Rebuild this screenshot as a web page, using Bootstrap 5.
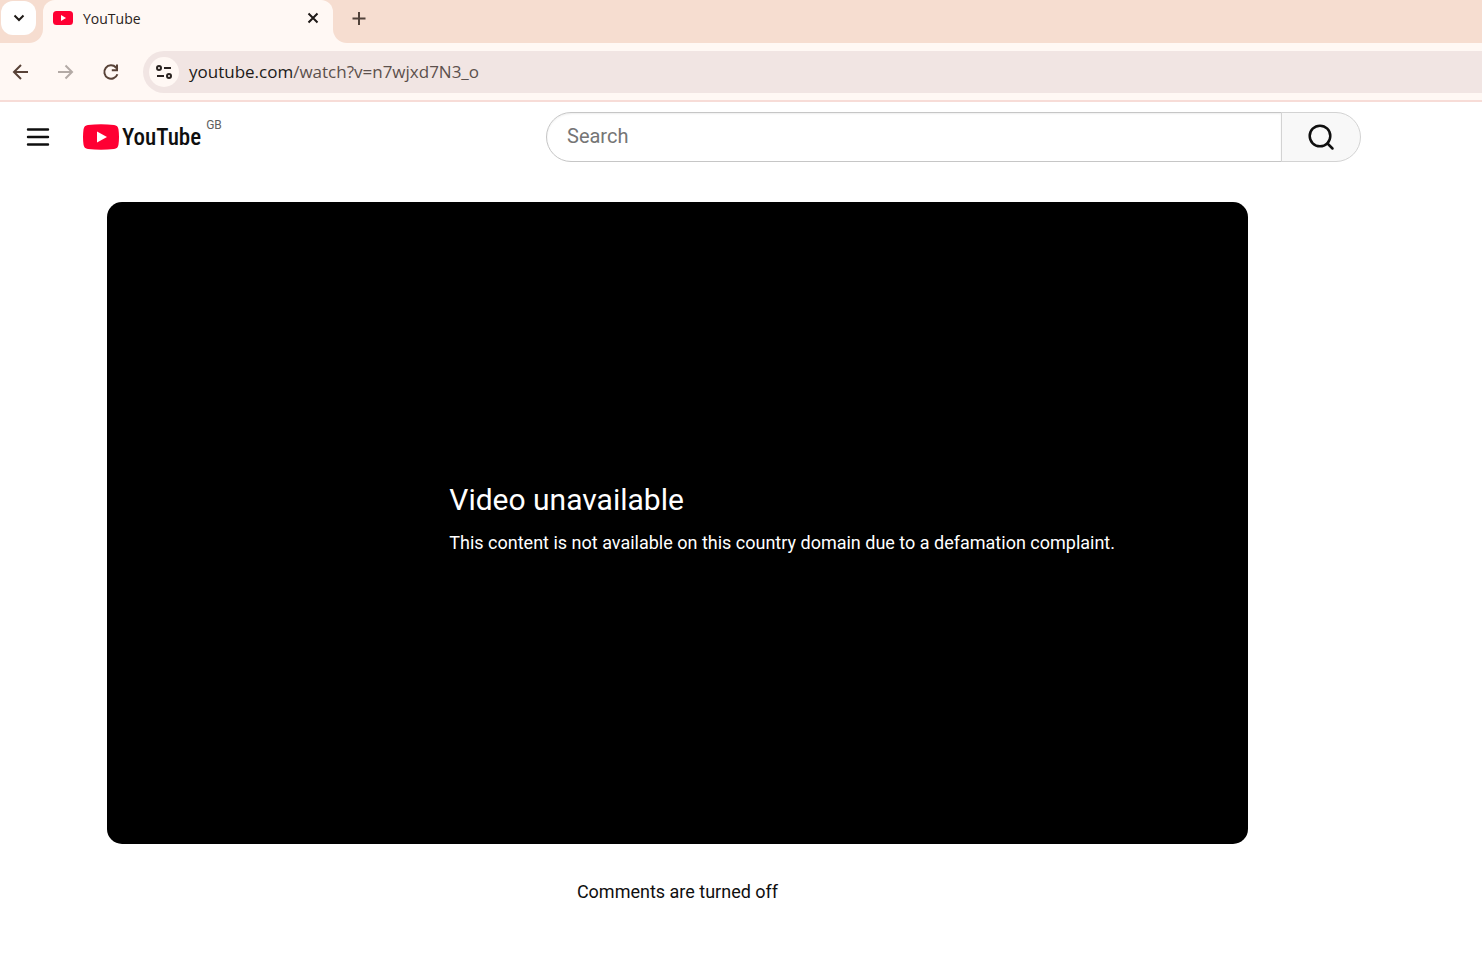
<!DOCTYPE html>
<html lang="en-GB">
<head>
<meta charset="utf-8">
<meta name="viewport" content="width=device-width, initial-scale=1">
<title>YouTube</title>
<link href="https://cdn.jsdelivr.net/npm/bootstrap@5.3.0/dist/css/bootstrap.min.css" rel="stylesheet">
<style>
:root { --frame: #f6ddd0; --toolbar: #fff8f4; --omni: #f1e5e3; --chrome-font: "Open Sans", "Noto Sans", sans-serif; }
body { font-family: Roboto, Arial, sans-serif; color: #0f0f0f; background: #fff; }
svg { display: block; flex: none; }
.plain-btn { padding: 0; border: 0; background: none; color: inherit; display: flex; align-items: center; justify-content: center; }
.browser { font-family: var(--chrome-font); background: var(--toolbar); border-bottom: 2px solid #f7dcd7; }
.tab-strip { height: 43px; }
.strip-start { width: 43px; padding: 1px; background: var(--frame); border-bottom-right-radius: 14px; }
.tab-search { width: 35px; height: 34px; border-radius: 12px; background: #fff; color: #1f1a17; }
.tab-slot { width: 290px; background: linear-gradient(var(--frame) 20px, var(--toolbar) 20px); }
.open-tab { height: 100%; padding: 0 12px 7px 10px; gap: 10px; border-radius: 12px 12px 0 0; background: var(--toolbar); font-size: 14px; color: #2a2320; }
.strip-end { background: var(--frame); border-bottom-left-radius: 14px; color: #51423a; padding: 0 0 7px 18px; }
.tool-row { height: 57px; padding-left: 12px; color: #584237; }
.nav-set { gap: 27px; width: 131px; }
.nav-set button:disabled { color: #b3aaa5; }
.omnibox { height: 42px; border-radius: 21px 0 0 21px; background: var(--omni); padding-left: 6px; gap: 10px; }
.site-info { width: 30px; height: 30px; border-radius: 50%; background: var(--toolbar); color: #2a2320; }
.address { font-size: 17px; color: #5c504c; padding-top: 1px; }
.address b { font-weight: 400; color: #201a18; }
.masthead { padding: 10px 121px 0 26px; height: 60px; }
.brand-area { width: 520px; }
.brand-link { margin-left: 33px; gap: 3px; color: #0f0f0f; }
.wordmark { font-family: "Roboto Condensed", "Liberation Sans Narrow", Roboto, sans-serif; font-weight: 500; font-size: 23px; line-height: 28px; padding-top: 2px; }
.region-code { font-size: 12px; line-height: 12px; color: #606060; margin-left: 5px; margin-bottom: 24px; }
.search-field { height: 50px; padding: 0 20px 2px; border: 1px solid #c6c6c6; border-radius: 25px 0 0 25px; box-shadow: inset 0 1px 2px #eee; font-size: 20px; }
.search-field::placeholder { color: #757575; }
.search-btn { width: 80px; height: 50px; margin-left: -1px; border: 1px solid #d3d3d3; border-radius: 0 25px 25px 0; background: #f8f8f8; }
.watch { padding: 40px 234px 0 107px; }
.player { aspect-ratio: 16 / 9; border-radius: 15px; background: #000; color: #fff; padding-left: 30%; }
.player h1 { font-size: 30px; line-height: 40px; font-weight: 400; margin: 0 0 11px; }
.player p { font-size: 18px; line-height: 24px; margin: 0 0 11px; }
.comments-note { font-size: 18px; line-height: 24px; margin: 36px 0; }
</style>
</head>
<body>
<header class="browser">
  <div class="tab-strip d-flex">
    <div class="strip-start">
      <button class="plain-btn tab-search" aria-label="Search tabs"><svg width="12" height="8" viewBox="0 0 12 8" fill="none" stroke="currentColor" stroke-width="2"><path d="M1.500 1.500 6 6l4.500-4.500"/></svg></button>
    </div>
    <div class="tab-slot">
      <div class="open-tab d-flex align-items-center">
        <svg width="20" height="14" viewBox="0 0 20 14"><rect width="20" height="14" rx="3.500" fill="#ff0033"/><path d="M8 4v6l5-3z" fill="#fff"/></svg>
        <span class="flex-grow-1">YouTube</span>
        <button class="plain-btn" aria-label="Close tab"><svg width="16" height="16" viewBox="0 0 16 16" stroke="#1f1a17" stroke-width="2"><path d="m3.500 3.500 9 9m0-9-9 9"/></svg></button>
      </div>
    </div>
    <div class="strip-end flex-grow-1 d-flex align-items-center">
      <button class="plain-btn" aria-label="New tab"><svg width="15" height="15" viewBox="0 0 15 15" stroke="currentColor" stroke-width="2"><path d="M8 1v13M1.500 7.500h13"/></svg></button>
    </div>
  </div>
  <div class="tool-row d-flex align-items-center">
    <nav class="nav-set d-flex flex-shrink-0" aria-label="Browser controls">
      <button class="plain-btn" aria-label="Back"><svg width="18" height="18" viewBox="0 0 18 18" fill="none" stroke="currentColor" stroke-width="2"><path d="M16 9H2.500M9 2 2 9l7 7"/></svg></button>
      <button class="plain-btn" aria-label="Forward" disabled><svg width="18" height="18" viewBox="0 0 18 18" fill="none" stroke="currentColor" stroke-width="2"><path d="M1 9h14M8.500 2.500 15 9l-6.500 6.500"/></svg></button>
      <button class="plain-btn" aria-label="Reload"><svg width="18" height="18" viewBox="0 0 18 18" fill="none" stroke="currentColor" stroke-width="2"><path d="M15.400 11.200A6.700 6.700 0 1 1 14 4.500l1.500 1.700"/><path d="M15 1.500v5.700H9.800" /></svg></button>
    </nav>
    <div class="omnibox flex-grow-1 d-flex align-items-center">
      <button class="plain-btn site-info" aria-label="View site information"><svg width="16" height="16" viewBox="0 0 16 16" fill="none" stroke="currentColor" stroke-width="2"><circle cx="3" cy="4" r="2"/><path d="M8 4h7M1 12h7"/><circle cx="13" cy="12" r="2"/></svg></button>
      <span class="address text-nowrap"><b>youtube.com</b>/watch?v=n7wjxd7N3_o</span>
    </div>
  </div>
</header>

<div class="masthead d-flex align-items-center">
  <div class="brand-area d-flex align-items-center flex-shrink-0">
    <button class="plain-btn" aria-label="Guide"><svg width="24" height="22" viewBox="0 0 24 22" stroke="#0f0f0f" stroke-width="2.400" stroke-linecap="round"><path d="M2 3.500h20M2 11h20M2 18.500h20"/></svg></button>
    <a href="#" class="brand-link d-flex align-items-center text-decoration-none" aria-label="YouTube Home">
      <svg width="36" height="26" viewBox="0 0 36 26"><path d="M5 1Q18-.4 31 1q4 .3 4.500 4.500 1 7.500 0 15Q35 24.500 31 25q-13 1.400-26 0-4-.5-4.500-4.500-1-7.500 0-15Q1 1.300 5 1Z" fill="#ff0033"/><path d="M14 7.500v11l10-5.500z" fill="#fff"/></svg>
      <span class="wordmark">YouTube</span>
    </a>
    <span class="region-code">GB</span>
  </div>
  <form class="d-flex flex-grow-1" role="search">
    <input class="search-field flex-grow-1" type="text" placeholder="Search" aria-label="Search">
    <button class="plain-btn search-btn" type="button" aria-label="Search"><svg width="28" height="28" viewBox="0 0 28 28" fill="none" stroke="#0f0f0f" stroke-width="2.500" stroke-linecap="round"><circle cx="13" cy="13" r="10.300"/><path d="m20.500 20.500 5 5"/></svg></button>
  </form>
</div>

<main class="watch">
  <section class="player d-flex flex-column justify-content-center">
    <h1>Video unavailable</h1>
    <p>This content is not available on this country domain due to a defamation complaint.</p>
  </section>
  <p class="comments-note text-center">Comments are turned off</p>
</main>
<script src="https://cdn.jsdelivr.net/npm/bootstrap@5.3.0/dist/js/bootstrap.bundle.min.js"></script>
</body>
</html>
